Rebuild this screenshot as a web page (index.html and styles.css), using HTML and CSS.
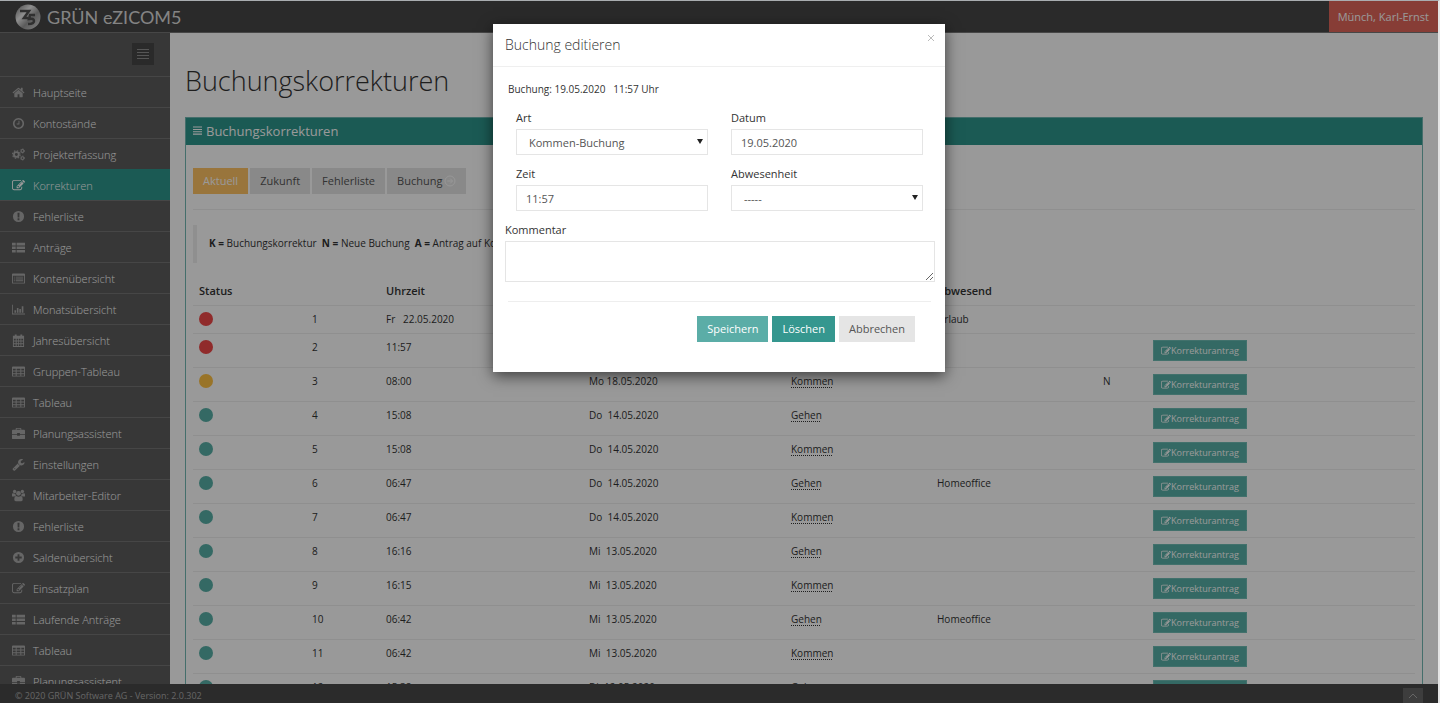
FILE: index.html
```html
<!DOCTYPE html>
<html lang="de">
<head>
    <meta charset="UTF-8">
    <meta name="viewport" content="width=device-width, initial-scale=1.0">
    <title>Buchungskorrekturen</title>
    <link rel="stylesheet" href="styles.css">
</head>
<body>
    <!-- Icons -->
    <svg class="sprite" aria-hidden="true">
        <symbol id="i-home" viewBox="0 0 1792 1792"><path d="M1472 992v480q0 26-19 45t-45 19h-384v-384h-256v384h-384q-26 0-45-19t-19-45v-480q0-1 .5-3t.5-3l575-474 575 474q1 2 1 6zm223-69l-62 74q-8 9-21 11h-3q-13 0-21-7l-692-577-692 577q-12 8-24 7-13-2-21-11l-62-74q-8-10-7-23.5t11-21.5l719-599q32-26 76-26t76 26l244 204v-195q0-14 9-23t23-9h192q14 0 23 9t9 23v408l219 182q10 8 11 21.5t-7 23.5z"/></symbol>
        <symbol id="i-clock" viewBox="0 0 1792 1792"><path d="M1024 544v448q0 14-9 23t-23 9h-320q-14 0-23-9t-9-23v-64q0-14 9-23t23-9h224v-352q0-14 9-23t23-9h64q14 0 23 9t9 23zm416 352q0-148-73-273t-198-198-273-73-273 73-198 198-73 273 73 273 198 198 273 73 273-73 198-198 73-273zm224 0q0 209-103 385.5t-279.5 279.5-385.5 103-385.5-103-279.5-279.5-103-385.5 103-385.5 279.5-279.5 385.5-103 385.5 103 279.5 279.5 103 385.5z"/></symbol>
        <symbol id="i-cogs" viewBox="0 0 14 14"><g fill="none" stroke="currentColor"><circle cx="4.7" cy="7" r="2.6" stroke-width="2"/><circle cx="4.7" cy="7" r="4.1" stroke-width="1.2" stroke-dasharray="1.6 1.62"/><circle cx="11.3" cy="3.2" r="1.5" stroke-width="1.1"/><circle cx="11.3" cy="3.2" r="2.3" stroke-width=".8" stroke-dasharray="1.2 1.2"/><circle cx="11.3" cy="10.8" r="1.5" stroke-width="1.1"/><circle cx="11.3" cy="10.8" r="2.3" stroke-width=".8" stroke-dasharray="1.2 1.2"/></g></symbol>
        <symbol id="i-edit" viewBox="0 0 1792 1792"><path d="M888 1184l116-116-152-152-116 116v56h96v96h56zm440-720q-16-16-33 1l-350 350q-17 17-1 33t33-1l350-350q17-17 1-33zm80 594v190q0 119-84.5 203.5t-203.5 84.5h-832q-119 0-203.5-84.5t-84.5-203.5v-832q0-119 84.5-203.5t203.5-84.5h832q63 0 117 25 15 7 18 23 3 17-9 29l-49 49q-14 14-32 8-23-6-45-6h-832q-66 0-113 47t-47 113v832q0 66 47 113t113 47h832q66 0 113-47t47-113v-126q0-13 9-22l64-64q15-15 35-7t20 29zm-96-738l288 288-672 672h-288v-288zm444 132l-92 92-288-288 92-92q28-28 68-28t68 28l152 152q28 28 28 68t-28 68z"/></symbol>
        <symbol id="i-warn" viewBox="0 0 14 14"><path fill-rule="evenodd" d="M7 1a6 6 0 1 1 0 12A6 6 0 0 1 7 1zM5.9 3l.2 5h1.8l.2-5zM6 9v2h2V9z"/></symbol>
        <symbol id="i-thlist" viewBox="0 0 14 14"><path d="M0 2h4v2.8H0zM5 2h9v2.8H5zM0 5.8h4v2.8H0zM5 5.8h9v2.8H5zM0 9.6h4v2.8H0zM5 9.6h9v2.8H5z"/></symbol>
        <symbol id="i-listalt" viewBox="0 0 14 14"><path fill-rule="evenodd" d="M1 1.5h12q1 0 1 1v9q0 1-1 1H1q-1 0-1-1v-9q0-1 1-1zM1 4v7.5h12V4zM2 5h1v1H2zM4 5h8v1H4zM2 7h1v1H2zM4 7h8v1H4zM2 9h1v1H2zM4 9h8v1H4z"/></symbol>
        <symbol id="i-chart" viewBox="0 0 16 14"><path d="M0 1h1v11h15v1H0zM3 8h2v3H3zM6 5h2v6H6zM9 6.5h2V11H9zM12 3h2v8h-2z"/></symbol>
        <symbol id="i-calendar" viewBox="0 0 14 14"><path fill-rule="evenodd" d="M1 2h2V.5h2V2h4V.5h2V2h2v12H1zM2 5v2h2V5zM5 5v2h1.7V5zM7.5 5v2h1.7V5zM10 5v2h2V5zM2 8v2h2V8zM5 8v2h1.7V8zM7.5 8v2h1.7V8zM10 8v2h2V8zM2 11v2h2v-2zM5 11v2h1.7v-2zM7.5 11v2h1.7v-2zM10 11v2h2v-2z"/></symbol>
        <symbol id="i-table" viewBox="0 0 14 14"><path fill-rule="evenodd" d="M1 1.5h12q1 0 1 1v9q0 1-1 1H1q-1 0-1-1v-9q0-1 1-1zM1 4v2h3V4zM5 4v2h4V4zM10 4v2h3V4zM1 7v2h3V7zM5 7v2h4V7zM10 7v2h3V7zM1 10v1.5h3V10zM5 10v1.5h4V10zM10 10v1.5h3V10z"/></symbol>
        <symbol id="i-case" viewBox="0 0 14 14"><path fill-rule="evenodd" d="M4 3V1.8Q4 1 4.8 1h4.4q.8 0 .8.8V3h3q1 0 1 1v3.5H8.5v-1h-3v1H0V4q0-1 1-1zM5 2v1h4V2zM0 8.3h5.5v1h3v-1H14V12q0 1-1 1H1q-1 0-1-1z"/></symbol>
        <symbol id="i-wrench" viewBox="0 0 1792 1792"><path d="M448 1472q0-26-19-45t-45-19-45 19-19 45 19 45 45 19 45-19 19-45zm644-420l-682 682q-37 37-90 37-52 0-91-37l-106-108q-38-36-38-90 0-53 38-91l681-681q39 98 114.5 173.5t173.5 114.5zm634-435q0 39-23 106-47 134-164.5 217.5t-258.5 83.5q-185 0-316.5-131.5t-131.5-316.5 131.5-316.5 316.5-131.5q58 0 121.5 16.5t107.5 46.5q16 11 16 28t-16 28l-293 169v224l193 107q5-3 79-48.5t135.5-81 70.5-35.5q15 0 23.5 10t8.5 25z"/></symbol>
        <symbol id="i-group" viewBox="0 0 14 14"><circle cx="2.8" cy="2.7" r="1.8"/><circle cx="11.2" cy="2.7" r="1.8"/><circle cx="7" cy="4.7" r="2.6"/><path d="M0 8V6q0-1.6 1.2-1.4Q2.6 5.4 3.7 5 3.7 6.5 4.4 7.2 3.2 7.2 2.6 8zM14 8V6q0-1.6-1.2-1.4Q11.4 5.4 10.3 5q0 1.5-.7 2.2 1.2 0 1.8.8zM2.5 11.6Q2.5 7.6 4.5 7.6 7 9 9.5 7.6q2 0 2 4 0 1.6-1.5 1.6H4q-1.5 0-1.5-1.6z"/></symbol>
        <symbol id="i-plus" viewBox="0 0 14 14"><path fill-rule="evenodd" d="M7 1a6 6 0 1 1 0 12A6 6 0 0 1 7 1zM6 3.5V6H3.5v2H6v2.5h2V8h2.5V6H8V3.5z"/></symbol>
        <symbol id="i-arrow" viewBox="0 0 14 14"><g fill="none" stroke="currentColor"><circle cx="7" cy="7" r="5.8"/><path d="M3.800 7h6M7.3 4.3L10 7l-2.7 2.7"/></g></symbol>
        <symbol id="i-bars" viewBox="0 0 10 10"><path d="M0 .6h10v1.200H0zM0 3.200h10v1.200H0zM0 5.800h10V7H0zM0 8.400h10v1.200H0z"/></symbol>
    </svg>

    <header class="header">
        <a class="logo" href="#">
            <svg class="logo-mark" viewBox="0 0 26 26" aria-hidden="true">
                <defs>
                    <linearGradient id="ball" x1="0" y1="0" x2="1" y2="1">
                        <stop offset="0" stop-color="#777"/>
                        <stop offset=".35" stop-color="#eee"/>
                        <stop offset=".6" stop-color="#999"/>
                        <stop offset="1" stop-color="#ddd"/>
                    </linearGradient>
                </defs>
                <circle cx="13" cy="13" r="12.5" fill="url(#ball)"/>
                <path d="M5 7h9l-5 7h4M20 11h-5l-1 4q5-1 5 2t-6 3" fill="none" stroke="#505050" stroke-width="2.500"/>
            </svg>
            <span>GRÜN eZICOM5</span>
        </a>
        <a class="user" href="#">Münch, Karl-Ernst</a>
    </header>

    <div class="page">
        <nav class="sidebar">
            <div class="toggle-row">
                <button class="toggle" type="button" aria-label="Menü">
                    <svg viewBox="0 0 12 12"><path d="M0 1.500h12M0 4.500h12M0 7.500h12M0 10.500h12" stroke="currentColor"/></svg>
                </button>
            </div>
            <ul class="menu">
                <li><a href="#"><svg class="icon"><use href="#i-home"/></svg>Hauptseite</a></li>
                <li><a href="#"><svg class="icon"><use href="#i-clock"/></svg>Kontostände</a></li>
                <li><a href="#"><svg class="icon"><use href="#i-cogs"/></svg>Projekterfassung</a></li>
                <li class="active"><a href="#"><svg class="icon"><use href="#i-edit"/></svg>Korrekturen</a></li>
                <li><a href="#"><svg class="icon"><use href="#i-warn"/></svg>Fehlerliste</a></li>
                <li><a href="#"><svg class="icon"><use href="#i-thlist"/></svg>Anträge</a></li>
                <li><a href="#"><svg class="icon"><use href="#i-listalt"/></svg>Kontenübersicht</a></li>
                <li><a href="#"><svg class="icon"><use href="#i-chart"/></svg>Monatsübersicht</a></li>
                <li><a href="#"><svg class="icon"><use href="#i-calendar"/></svg>Jahresübersicht</a></li>
                <li><a href="#"><svg class="icon"><use href="#i-table"/></svg>Gruppen-Tableau</a></li>
                <li><a href="#"><svg class="icon"><use href="#i-table"/></svg>Tableau</a></li>
                <li><a href="#"><svg class="icon"><use href="#i-case"/></svg>Planungsassistent</a></li>
                <li><a href="#"><svg class="icon"><use href="#i-wrench"/></svg>Einstellungen</a></li>
                <li><a href="#"><svg class="icon"><use href="#i-group"/></svg>Mitarbeiter-Editor</a></li>
                <li><a href="#"><svg class="icon"><use href="#i-warn"/></svg>Fehlerliste</a></li>
                <li><a href="#"><svg class="icon"><use href="#i-plus"/></svg>Saldenübersicht</a></li>
                <li><a href="#"><svg class="icon"><use href="#i-edit"/></svg>Einsatzplan</a></li>
                <li><a href="#"><svg class="icon"><use href="#i-thlist"/></svg>Laufende Anträge</a></li>
                <li><a href="#"><svg class="icon"><use href="#i-table"/></svg>Tableau</a></li>
                <li><a href="#"><svg class="icon"><use href="#i-case"/></svg>Planungsassistent</a></li>
            </ul>
        </nav>

        <main class="content">
            <h1>Buchungskorrekturen</h1>
            <section class="portlet">
                <h2><svg class="icon-bars"><use href="#i-bars"/></svg>Buchungskorrekturen</h2>
                <div class="portlet-body">
                    <div class="tabs">
                        <button class="btn yellow" type="button">Aktuell</button>
                        <button class="btn" type="button">Zukunft</button>
                        <button class="btn" type="button">Fehlerliste</button>
                        <button class="btn" type="button">Buchung<svg class="icon-arrow"><use href="#i-arrow"/></svg></button>
                    </div>
                    <p class="legend"><b>K =</b> Buchungskorrektur&nbsp; <b>N =</b> Neue Buchung&nbsp; <b>A =</b> Antrag auf Korrektur</p>
                    <table>
                        <colgroup>
                            <col class="c-status"><col class="c-nr"><col class="c-time"><col class="c-date"><col class="c-type"><col class="c-abs"><col class="c-flag"><col>
                        </colgroup>
                        <thead>
                            <tr><th>Status</th><th></th><th>Uhrzeit</th><th>Datum</th><th>Art</th><th>Abwesend</th><th></th><th></th></tr>
                        </thead>
                        <tbody>
                            <tr><td><span class="dot red"></span></td><td>1</td><td>Fr &nbsp; 22.05.2020</td><td></td><td></td><td>Urlaub</td><td></td><td></td></tr>
                            <tr><td><span class="dot red"></span></td><td>2</td><td>11:57</td><td>Di &nbsp;19.05.2020</td><td><abbr title="Kommen-Buchung">Kommen</abbr></td><td></td><td></td><td><button class="btn-small" type="button"><svg><use href="#i-edit"/></svg>Korrekturantrag</button></td></tr>
                            <tr><td><span class="dot amber"></span></td><td>3</td><td>08:00</td><td>Mo 18.05.2020</td><td><abbr title="Kommen-Buchung">Kommen</abbr></td><td></td><td>N</td><td><button class="btn-small" type="button"><svg><use href="#i-edit"/></svg>Korrekturantrag</button></td></tr>
                            <tr><td><span class="dot"></span></td><td>4</td><td>15:08</td><td>Do &nbsp;14.05.2020</td><td><abbr title="Gehen-Buchung">Gehen</abbr></td><td></td><td></td><td><button class="btn-small" type="button"><svg><use href="#i-edit"/></svg>Korrekturantrag</button></td></tr>
                            <tr><td><span class="dot"></span></td><td>5</td><td>15:08</td><td>Do &nbsp;14.05.2020</td><td><abbr title="Kommen-Buchung">Kommen</abbr></td><td></td><td></td><td><button class="btn-small" type="button"><svg><use href="#i-edit"/></svg>Korrekturantrag</button></td></tr>
                            <tr><td><span class="dot"></span></td><td>6</td><td>06:47</td><td>Do &nbsp;14.05.2020</td><td><abbr title="Gehen-Buchung">Gehen</abbr></td><td>Homeoffice</td><td></td><td><button class="btn-small" type="button"><svg><use href="#i-edit"/></svg>Korrekturantrag</button></td></tr>
                            <tr><td><span class="dot"></span></td><td>7</td><td>06:47</td><td>Do &nbsp;14.05.2020</td><td><abbr title="Kommen-Buchung">Kommen</abbr></td><td></td><td></td><td><button class="btn-small" type="button"><svg><use href="#i-edit"/></svg>Korrekturantrag</button></td></tr>
                            <tr><td><span class="dot"></span></td><td>8</td><td>16:16</td><td>Mi &nbsp;13.05.2020</td><td><abbr title="Gehen-Buchung">Gehen</abbr></td><td></td><td></td><td><button class="btn-small" type="button"><svg><use href="#i-edit"/></svg>Korrekturantrag</button></td></tr>
                            <tr><td><span class="dot"></span></td><td>9</td><td>16:15</td><td>Mi &nbsp;13.05.2020</td><td><abbr title="Kommen-Buchung">Kommen</abbr></td><td></td><td></td><td><button class="btn-small" type="button"><svg><use href="#i-edit"/></svg>Korrekturantrag</button></td></tr>
                            <tr><td><span class="dot"></span></td><td>10</td><td>06:42</td><td>Mi &nbsp;13.05.2020</td><td><abbr title="Gehen-Buchung">Gehen</abbr></td><td>Homeoffice</td><td></td><td><button class="btn-small" type="button"><svg><use href="#i-edit"/></svg>Korrekturantrag</button></td></tr>
                            <tr><td><span class="dot"></span></td><td>11</td><td>06:42</td><td>Mi &nbsp;13.05.2020</td><td><abbr title="Kommen-Buchung">Kommen</abbr></td><td></td><td></td><td><button class="btn-small" type="button"><svg><use href="#i-edit"/></svg>Korrekturantrag</button></td></tr>
                            <tr><td><span class="dot"></span></td><td>12</td><td>15:38</td><td>Di &nbsp;12.05.2020</td><td><abbr title="Gehen-Buchung">Gehen</abbr></td><td></td><td></td><td><button class="btn-small" type="button"><svg><use href="#i-edit"/></svg>Korrekturantrag</button></td></tr>
                        </tbody>
                    </table>
                </div>
            </section>
        </main>
    </div>

    <footer class="footer">
        <span>© 2020 GRÜN Software AG - Version: 2.0.302</span>
        <button class="to-top" type="button" aria-label="Nach oben">
            <svg viewBox="0 0 10 6"><path d="M1 5l4-4 4 4" fill="none" stroke="currentColor"/></svg>
        </button>
    </footer>

    <!-- Dialog -->
    <div class="backdrop">
        <form class="modal" role="dialog" aria-labelledby="modal-title">
            <div class="modal-header">
                <h3 id="modal-title">Buchung editieren</h3>
                <button class="close" type="button" aria-label="Schließen"><svg viewBox="0 0 8 8"><path d="M1 1l6 6M7 1L1 7" stroke="currentColor"/></svg></button>
            </div>
            <div class="modal-body">
                <p class="info">Buchung: 19.05.2020 &nbsp; 11:57 Uhr</p>
                <div class="fields">
                    <div class="field">
                        <label for="art">Art</label>
                        <div class="select-wrap">
                            <select id="art"><option>Kommen-Buchung</option><option>Gehen-Buchung</option></select>
                        </div>
                    </div>
                    <div class="field">
                        <label for="datum">Datum</label>
                        <input type="text" id="datum" value="19.05.2020">
                    </div>
                    <div class="field">
                        <label for="zeit">Zeit</label>
                        <input type="text" id="zeit" value="11:57">
                    </div>
                    <div class="field">
                        <label for="abwesenheit">Abwesenheit</label>
                        <div class="select-wrap">
                            <select id="abwesenheit"><option>-----</option></select>
                        </div>
                    </div>
                </div>
                <div class="field">
                    <label for="kommentar">Kommentar</label>
                    <textarea id="kommentar"></textarea>
                </div>
                <div class="actions">
                    <button class="btn save" type="submit">Speichern</button>
                    <button class="btn delete" type="button">Löschen</button>
                    <button class="btn" type="button">Abbrechen</button>
                </div>
            </div>
        </form>
    </div>
</body>
</html>
```
FILE: styles.css
```css
* {
    box-sizing: border-box;
}

body {
    position: relative;
    display: flex;
    flex-direction: column;
    height: 100vh;
    margin: 0;
    overflow: hidden;
    border-top: 1px solid #a9adb0;
    border-right: 2px solid #e4e4e4;
    background: #fff;
    color: #333;
    font-family: "Open Sans", sans-serif;
    font-size: 11px;
}

h1, h2, h3, p, ul {
    margin: 0;
    padding: 0;
}

a {
    color: inherit;
    text-decoration: none;
}

button, input, select, textarea {
    font-family: inherit;
    font-size: 11px;
}

svg {
    fill: currentColor;
}

.sprite {
    position: absolute;
    width: 0;
    height: 0;
}

/* Kopfzeile */
.header {
    display: flex;
    flex: none;
    justify-content: space-between;
    height: 32px;
    padding-left: 15px;
    border-bottom: 1px solid #777;
    background: #464646;
}

.logo {
    display: flex;
    align-items: center;
    gap: 6px;
    color: #ddd;
    font-family: Lato, sans-serif;
    font-size: 18px;
}

.logo-mark {
    width: 26px;
    height: 26px;
}

.user {
    display: flex;
    align-items: center;
    padding: 0 9px;
    background: #e2675b;
    color: #fff;
}

.page {
    display: flex;
    flex: 1;
    min-height: 0;
}

/* Navigation */
.sidebar {
    flex: none;
    width: 170px;
    overflow: hidden;
    background: #5d5d5d;
    color: #fff;
}

.toggle-row {
    display: flex;
    justify-content: flex-end;
    padding: 10px 16px 11px;
}

.toggle {
    display: flex;
    align-items: center;
    justify-content: center;
    width: 22px;
    height: 22px;
    padding: 0;
    border: 0;
    background: #464646;
    color: #909090;
}

.toggle svg {
    width: 12px;
    height: 12px;
}

.menu {
    list-style: none;
}

.menu a {
    display: flex;
    align-items: center;
    gap: 8px;
    height: 31px;
    padding-left: 12px;
    border-top: 1px solid #757575;
    font-weight: 300;
}

.icon {
    width: 13px;
    height: 13px;
    color: #aaa;
}

.menu .active a {
    border-color: #2d968c;
    background: #2d968c;
}

.active .icon {
    color: #fff;
}

/* Inhalt */
.content {
    flex: 1;
    padding: 30px 15px 0;
    overflow: hidden;
}

h1 {
    margin-bottom: 18px;
    font-size: 27px;
    font-weight: 300;
    line-height: 36px;
}

.portlet {
    border: 1px solid #72b8b2;
}

.portlet h2 {
    display: flex;
    align-items: center;
    gap: 4px;
    height: 27px;
    padding: 0 7px 2px;
    background: #2d968c;
    color: #fff;
    font-size: 13px;
    font-weight: 400;
}

.icon-bars {
    width: 9px;
    height: 9px;
}

.portlet-body {
    padding: 23px 7px;
}

.tabs {
    display: flex;
    gap: 2px;
    padding-bottom: 15px;
    border-bottom: 1px solid #eee;
}

.btn {
    display: flex;
    align-items: center;
    height: 26px;
    padding: 0 9px 1px;
    border: 1px solid #e5e5e5;
    background: #e5e5e5;
    color: #555;
}

.yellow {
    border-color: #ffc465;
    background: #ffc465;
    color: #fff;
}

.icon-arrow {
    width: 12px;
    height: 12px;
    margin-left: 2px;
    color: #fff;
}

.legend {
    margin: 15px 0;
    padding: 9px 12px 11px;
    border-left: 4px solid #eee;
    font-size: 10px;
    line-height: 18px;
}

table {
    width: 100%;
    border-collapse: collapse;
    table-layout: fixed;
}

.c-status { width: 113px; }
.c-nr { width: 74px; }
.c-time { width: 203px; }
.c-date { width: 202px; }
.c-type { width: 146px; }
.c-abs { width: 166px; }
.c-flag { width: 50px; }

th, td {
    padding: 6px;
    text-align: left;
    vertical-align: top;
    line-height: 15px;
}

th {
    padding: 5px 6px 7px;
    font-size: 11px;
    font-weight: 600;
}

td {
    border-top: 1px solid #eee;
    font-size: 10px;
}

abbr {
    text-decoration: underline dotted 1px;
    text-underline-offset: 2px;
    text-decoration-skip-ink: none;
}

.dot {
    display: block;
    width: 14px;
    height: 14px;
    border-radius: 50%;
    background: #58b0a7;
}

.red {
    background: #f04848;
}

.amber {
    background: #ffc244;
}

.btn-small {
    display: flex;
    align-items: center;
    height: 21px;
    padding: 0 7px;
    border: 1px solid #6fbdb5;
    background: #58b0a7;
    color: #fff;
    font-size: 9px;
}

.btn-small svg {
    width: 10px;
    height: 10px;
}

/* Fußzeile */
.footer {
    display: flex;
    flex: none;
    justify-content: space-between;
    height: 19px;
    padding: 4px 15px 0;
    background: #494949;
    color: #aaa;
    font-size: 9px;
    line-height: 16px;
}

.to-top {
    display: flex;
    align-items: center;
    justify-content: center;
    width: 20px;
    height: 15px;
    padding: 0;
    border: 0;
    background: #666;
    color: #aaa;
}

.to-top svg {
    width: 10px;
    height: 6px;
}

/* Dialog */
.backdrop {
    position: absolute;
    inset: 0;
    background: rgba(0, 0, 0, 0.4);
}

.modal {
    width: 452px;
    margin: 23px auto;
    background: #fff;
    box-shadow: 0 4px 14px rgba(0, 0, 0, 0.6);
}

.modal-header {
    display: flex;
    align-items: flex-start;
    justify-content: space-between;
    padding: 10px;
    border-bottom: 1px solid #efefef;
}

.modal-header h3 {
    padding-left: 2px;
    font-size: 14px;
    font-weight: 300;
    line-height: 22px;
}

.close {
    display: flex;
    padding: 0;
    border: 0;
    background: none;
    color: #bbb;
}

.close svg {
    width: 8px;
    height: 8px;
}

.modal-body {
    padding: 14px 10px 30px 12px;
}

.info {
    padding-left: 3px;
    font-size: 10px;
    line-height: 16px;
}

.fields {
    display: grid;
    grid-template-columns: 1fr 1fr;
    gap: 10px 23px;
    margin: 12px 12px 10px 11px;
}

.field label {
    display: block;
    margin-bottom: 2px;
    line-height: 18px;
}

input, select, textarea {
    display: block;
    width: 100%;
    border: 1px solid #e5e5e5;
    background: #fff;
    color: #555;
}

input, select {
    height: 26px;
    padding: 0 9px;
}

select {
    padding-left: 12px;
    appearance: none;
}

.select-wrap {
    position: relative;
}

.select-wrap::after {
    position: absolute;
    top: 10px;
    right: 5px;
    border: 3px solid transparent;
    border-top: 5px solid #222;
    border-bottom: 0;
    content: "";
}

textarea {
    height: 41px;
    resize: vertical;
}

.actions {
    display: flex;
    justify-content: flex-end;
    gap: 4px;
    margin: 19px 4px 0 3px;
    padding: 14px 16px 0 0;
    border-top: 1px solid #eee;
}

.save {
    border-color: #5bada7;
    background: #5bada7;
    color: #fff;
    font-weight: 500;
}

.delete {
    border-color: #35978f;
    background: #35978f;
    color: #fff;
    font-weight: 500;
}
```
